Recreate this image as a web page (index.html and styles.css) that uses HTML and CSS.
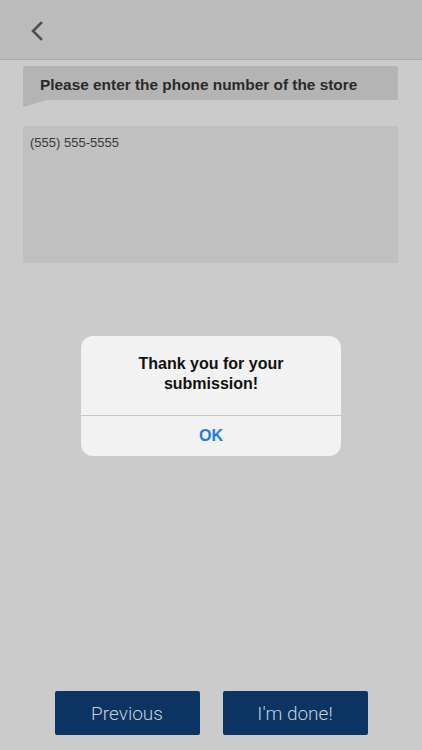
FILE: index.html
```html
<!DOCTYPE html>
<html lang="en">
<head>
    <meta charset="UTF-8">
    <meta name="viewport" content="width=device-width, initial-scale=1.0">
    <title>Store phone</title>
    <link rel="stylesheet" href="styles.css">
</head>
<body>

<div class="screen">
    <div class="top-bar">
        <button class="back-button" aria-label="Back">
            <svg width="14" height="20" viewBox="0 0 14 20">
                <path d="M11 2 L3 10 L11 18" fill="none" stroke="#4f4f4f" stroke-width="2.6" stroke-linecap="square"/>
            </svg>
        </button>
    </div>

    <div class="content">
        <div class="question-bubble">Please enter the phone number of the store</div>
        <div class="answer-box">(555) 555-5555</div>
    </div>

    <div class="nav-buttons">
        <button class="nav-button">Previous</button>
        <button class="nav-button">I'm done!</button>
    </div>
</div>

<div class="alert-layer">
    <div class="alert">
        <div class="alert-title">Thank you for your submission!</div>
        <button class="alert-ok">OK</button>
    </div>
</div>

</body>
</html>
```

FILE: styles.css
```css
body {
    margin: 0;
    padding: 0;
    font-family: 'Liberation Sans', Arial, sans-serif;
    background-color: #cbcbcb;
}
.screen {
    width: 422px;
    height: 750px;
    display: flex;
    flex-direction: column;
}
.top-bar {
    height: 59px;
    background-color: #bbbbbb;
    border-bottom: 1px solid #adadad;
    display: flex;
    align-items: center;
    padding-left: 30px;
}
.back-button {
    background: none;
    border: none;
    padding: 0;
    margin-top: 3px;
    display: flex;
}
.content {
    flex: 1;
    padding: 6px 24px 0 23px;
}
.question-bubble {
    position: relative;
    background-color: #b4b4b4;
    border-radius: 2px;
    height: 34px;
    line-height: 37px;
    padding-left: 17px;
    font-size: 15.4px;
    font-weight: bold;
    color: #2a2a2a;
}
.question-bubble::after {
    content: "";
    position: absolute;
    left: 0;
    top: 34px;
    border-top: 7px solid #b4b4b4;
    border-right: 24px solid transparent;
}
.answer-box {
    margin-top: 26px;
    height: 137px;
    background-color: #c0c0c0;
    padding: 9px 7px;
    box-sizing: border-box;
    font-size: 13px;
    color: #3a3a3a;
}
.nav-buttons {
    display: flex;
    justify-content: center;
    gap: 23px;
    padding-bottom: 15px;
}
.nav-button {
    width: 145px;
    height: 44px;
    background-color: #0b3462;
    color: #c3cfdd;
    border: none;
    border-radius: 2px;
    font-family: Roboto, 'Liberation Sans', sans-serif;
    font-size: 19px;
    font-weight: 300;
}
.alert-layer {
    position: fixed;
    top: 0;
    left: 0;
    width: 422px;
    height: 750px;
    display: flex;
    justify-content: center;
    padding-top: 336px;
    box-sizing: border-box;
}
.alert {
    width: 260px;
    height: 120px;
    background-color: #f2f2f2;
    border-radius: 12px;
    display: flex;
    flex-direction: column;
}
.alert-title {
    height: 80px;
    box-sizing: border-box;
    padding: 18px 40px 0;
    text-align: center;
    font-size: 16px;
    font-weight: bold;
    line-height: 20px;
    color: #111;
    border-bottom: 1px solid #c6c6c6;
}
.alert-ok {
    flex: 1;
    background: none;
    border: none;
    font-family: 'Liberation Sans', Arial, sans-serif;
    font-size: 16px;
    font-weight: bold;
    color: #1c7ce0;
}
```
